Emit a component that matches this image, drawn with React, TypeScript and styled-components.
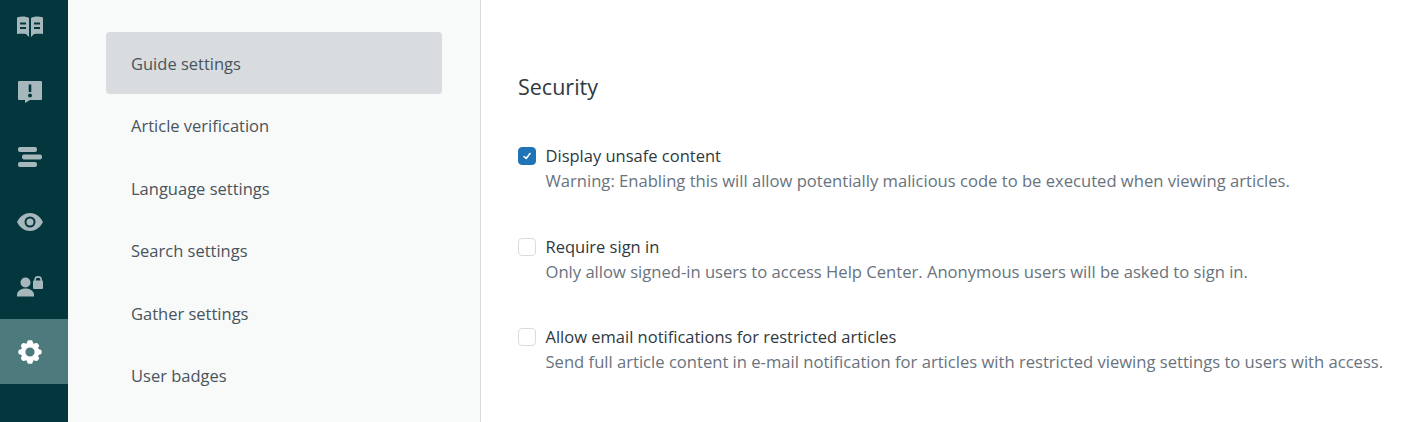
import React from "react";
import styled, { createGlobalStyle } from "styled-components";

const GlobalStyle = createGlobalStyle`
  html, body {
    margin: 0;
    padding: 0;
    height: 100%;
    overflow: hidden;
    background: #ffffff;
  }
  #root {
    height: 100%;
  }
`;

const RAIL_ICON = "#a6b8bb";

const BookIcon = () => (
  <svg width="26" height="22" viewBox="0 0 26 22">
    <path
      fill={RAIL_ICON}
      fillRule="evenodd"
      d="M0 1.5 C4 0 9 0 12 2 V21 L9 18 C6 17.5 3 17.5 0 18 Z M3 6.5 V8.5 H9 V6.5 Z M3 11 V13 H9 V11 Z M14 2 C17 0 22 0 26 1.5 V18 C23 17.5 20 17.5 17 18 L14 21 Z M17 6.5 V8.5 H23 V6.5 Z M17 11 V13 H23 V11 Z"
    />
  </svg>
);

const AlertIcon = () => (
  <svg width="24" height="22" viewBox="0 0 24 22">
    <path
      fill={RAIL_ICON}
      fillRule="evenodd"
      d="M1 0 H23 A1 1 0 0 1 24 1 V18 A1 1 0 0 1 23 19 H12 L7 22 V19 H1 A1 1 0 0 1 0 18 V1 A1 1 0 0 1 1 0 Z M10.7 3.5 V11 H13.3 V3.5 Z M12 12.5 A2 2 0 1 0 12 16.5 A2 2 0 1 0 12 12.5 Z"
    />
  </svg>
);

const BarsIcon = () => (
  <svg width="24" height="20" viewBox="0 0 24 20">
    <rect x="0" y="0" width="19" height="5" rx="2" fill={RAIL_ICON} />
    <rect x="4" y="7.5" width="20" height="5" rx="2" fill={RAIL_ICON} />
    <rect x="0" y="15" width="19" height="5" rx="2" fill={RAIL_ICON} />
  </svg>
);

const EyeIcon = () => (
  <svg width="26" height="18" viewBox="0 0 26 18">
    <path
      fill={RAIL_ICON}
      fillRule="evenodd"
      d="M0 9 C3 3 8 0 13 0 C18 0 23 3 26 9 C23 15 18 18 13 18 C8 18 3 15 0 9 Z M13 3.5 A5.5 5.5 0 1 0 13 14.5 A5.5 5.5 0 1 0 13 3.5 Z M13 5.5 A3.5 3.5 0 1 1 13 12.5 A3.5 3.5 0 1 1 13 5.5 Z"
    />
  </svg>
);

const UserLockIcon = () => (
  <svg width="26" height="22" viewBox="0 0 26 22">
    <circle cx="8.5" cy="6.5" r="5" fill={RAIL_ICON} />
    <path fill={RAIL_ICON} d="M0 19 C0 15 4 12.5 8.5 12.5 C13 12.5 17 15 17 19 V20.5 H0 Z" />
    <path
      fill={RAIL_ICON}
      fillRule="evenodd"
      d="M17.2 5 V4 A3.9 3.9 0 0 1 25 4 V5 Z M18.8 5 H23.4 V4 A2.3 2.3 0 0 0 18.8 4 Z"
    />
    <rect x="16" y="4.5" width="10" height="8.5" rx="1" fill={RAIL_ICON} />
  </svg>
);

const GearIcon = () => (
  <svg width="24" height="24" viewBox="0 0 24 24">
    <path
      fill="#ffffff"
      fillRule="evenodd"
      d="M9.8 0.4 C10.4 0.1 13.6 0.1 14.2 0.4 C14.7 0.7 14.7 2.7 15.4 3.4 C16.2 3.8 18.2 2.8 18.9 3 C19.6 3.3 21.1 5 21.2 5.7 C21.3 6.4 19.9 7.5 20.2 8.5 C20.5 9.3 22.9 9.6 23.4 10.2 C23.8 10.8 23.8 13.2 23.4 13.8 C22.9 14.4 20.5 14.7 20.2 15.5 C19.9 16.5 21.3 17.6 21.2 18.3 C21.1 19 19.6 20.7 18.9 21 C18.2 21.2 16.2 20.2 15.4 20.6 C14.7 21.3 14.7 23.3 14.2 23.6 C13.6 23.9 10.4 23.9 9.8 23.6 C9.3 23.3 9.3 21.3 8.6 20.6 C7.8 20.2 5.8 21.2 5.1 21 C4.4 20.7 2.9 19 2.8 18.3 C2.7 17.6 4.1 16.5 3.8 15.5 C3.5 14.7 1.1 14.4 0.6 13.8 C0.2 13.2 0.2 10.8 0.6 10.2 C1.1 9.6 3.5 9.3 3.8 8.5 C4.1 7.5 2.7 6.4 2.8 5.7 C2.9 5 4.4 3.3 5.1 3 C5.8 2.8 7.8 3.8 8.6 3.4 C9.3 2.7 9.3 0.7 9.8 0.4 Z M12 7.4 A4.6 4.6 0 1 0 12 16.6 A4.6 4.6 0 1 0 12 7.4 Z"
    />
  </svg>
);

const railIcons = [
  { icon: <BookIcon />, active: false },
  { icon: <AlertIcon />, active: false },
  { icon: <BarsIcon />, active: false },
  { icon: <EyeIcon />, active: false },
  { icon: <UserLockIcon />, active: false },
  { icon: <GearIcon />, active: true },
];

const navLinks = [
  "Guide settings",
  "Article verification",
  "Language settings",
  "Search settings",
  "Gather settings",
  "User badges",
];

const options = [
  {
    label: "Display unsafe content",
    hint: "Warning: Enabling this will allow potentially malicious code to be executed when viewing articles.",
    checked: true,
  },
  {
    label: "Require sign in",
    hint: "Only allow signed-in users to access Help Center. Anonymous users will be asked to sign in.",
    checked: false,
  },
  {
    label: "Allow email notifications for restricted articles",
    hint: "Send full article content in e-mail notification for articles with restricted viewing settings to users with access.",
    checked: false,
  },
];

export default function App() {
  return (
    <>
      <GlobalStyle />
      <Page>
        <Rail>
          {railIcons.map((item, i) => (
            <RailItem key={i} active={item.active}>
              {item.icon}
            </RailItem>
          ))}
        </Rail>
        <SideNav>
          {navLinks.map((link, i) => (
            <NavItem key={link} active={i === 0}>
              {link}
            </NavItem>
          ))}
        </SideNav>
        <Main>
          <Heading>Security</Heading>
          {options.map((option) => (
            <Option key={option.label}>
              <Checkbox checked={option.checked}>
                {option.checked && (
                  <svg width="10" height="10" viewBox="0 0 10 10">
                    <path
                      d="M2 5.5 L4.2 7.5 L8 2.5"
                      fill="none"
                      stroke="#ffffff"
                      strokeWidth="1.6"
                      strokeLinecap="round"
                      strokeLinejoin="round"
                    />
                  </svg>
                )}
              </Checkbox>
              <OptionText>
                <OptionLabel>{option.label}</OptionLabel>
                <OptionHint>{option.hint}</OptionHint>
              </OptionText>
            </Option>
          ))}
        </Main>
      </Page>
    </>
  );
}

const Page = styled.div`
  display: flex;
  height: 422px;
  overflow: hidden;
  font-family: "Open Sans", "Noto Sans", sans-serif;
`;

const Rail = styled.div`
  width: 68px;
  flex-shrink: 0;
  background-color: #03363d;
  display: flex;
  flex-direction: column;
  & > :first-child {
    margin-top: -6px;
  }
`;

const RailItem = styled.div<{ active: boolean }>`
  height: 65px;
  flex-shrink: 0;
  box-sizing: border-box;
  padding-right: 8px;
  display: flex;
  align-items: center;
  justify-content: center;
  background-color: ${({ active }) => (active ? "#4d7a7d" : "transparent")};
`;

const SideNav = styled.div`
  width: 413px;
  flex-shrink: 0;
  box-sizing: border-box;
  display: flex;
  flex-direction: column;
  gap: 0.6px;
  background-color: #f8f9f9;
  border-right: 1px solid #d8dcde;
  padding: 32px 38px 0;
`;

const NavItem = styled.div<{ active: boolean }>`
  height: 62px;
  flex-shrink: 0;
  display: flex;
  align-items: center;
  padding-left: 25px;
  border-radius: 4px;
  font-size: 16.5px;
  color: #49545c;
  background-color: ${({ active }) => (active ? "#d8dcde" : "transparent")};
`;

const Main = styled.div`
  flex: 1;
  padding: 70px 0 0 37px;
  background-color: #ffffff;
`;

const Heading = styled.div`
  font-size: 21.5px;
  line-height: 34px;
  color: #2f3941;
  margin-bottom: 39px;
`;

const Option = styled.div`
  display: flex;
  gap: 9.5px;
  height: 90.5px;
`;

const Checkbox = styled.div<{ checked: boolean }>`
  width: 18px;
  height: 18px;
  flex-shrink: 0;
  box-sizing: border-box;
  margin-top: 4px;
  border-radius: 4px;
  display: flex;
  align-items: center;
  justify-content: center;
  background-color: ${({ checked }) => (checked ? "#1f73b7" : "#ffffff")};
  border: 1px solid ${({ checked }) => (checked ? "#1f73b7" : "#d8dcde")};
`;

const OptionText = styled.div`
  display: flex;
  flex-direction: column;
  white-space: nowrap;
`;

const OptionLabel = styled.div`
  font-size: 16.5px;
  line-height: 25px;
  color: #2f3941;
`;

const OptionHint = styled.div`
  font-size: 16.6px;
  line-height: 25px;
  color: #68737d;
`;
